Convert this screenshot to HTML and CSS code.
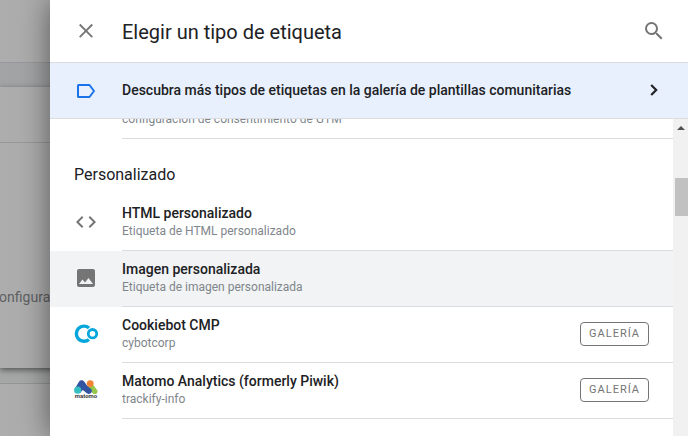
FILE: index.html
```html
<!DOCTYPE html>
<html lang="es">
<head>
<meta charset="utf-8">
<meta name="viewport" content="width=device-width, initial-scale=1">
<title>Elegir un tipo de etiqueta</title>
<link rel="stylesheet" href="styles.css">
</head>
<body>
<div class="page">
  <div class="page-top"></div>
  <div class="page-bar"></div>
  <div class="page-card">
    <div class="card-head"></div>
    <p class="card-text">Configurar</p>
  </div>
  <div class="page-gap"></div>
  <div class="page-next"></div>
</div>
<main class="sheet">
  <header class="sheet-header">
    <button class="icon-button" type="button" aria-label="Cerrar">
      <svg class="icon" viewBox="0 0 24 24"><path d="M5.700 5.500 18.300 18.100M18.300 5.500 5.700 18.100" fill="none" stroke="currentColor" stroke-width="1.800"/></svg>
    </button>
    <h1 class="title">Elegir un tipo de etiqueta</h1>
    <button class="icon-button" type="button" aria-label="Buscar">
      <svg class="icon" viewBox="0 0 24 24"><path fill="currentColor" d="M15.500 14h-.79l-.28-.27A6.471 6.471 0 0 0 16 9.500 6.500 6.500 0 1 0 9.500 16c1.610 0 3.090-.59 4.230-1.570l.27.28v.79l5 4.990L20.490 19l-4.990-5zm-6 0C7.010 14 5 11.990 5 9.500S7.010 5 9.500 5 14 7.010 14 9.500 11.990 14 9.500 14z"/></svg>
    </button>
  </header>
  <a class="banner" href="#galeria">
    <svg class="icon icon-tag" viewBox="0 0 24 24"><path d="M4.500 7H15.500L20 13 15.500 19H4.500A.5.5 0 0 1 4 18.500V7.500A.5.5 0 0 1 4.500 7Z" fill="none" stroke="currentColor" stroke-width="2" stroke-linejoin="round"/></svg>
    <span class="banner-text">Descubra más tipos de etiquetas en la galería de plantillas comunitarias</span>
    <svg class="icon icon-next" viewBox="0 0 24 24"><path d="M9.200 7 14.200 12 9.200 17" fill="none" stroke="currentColor" stroke-width="2.200"/></svg>
  </a>
  <div class="scroll-area">
    <div class="content">
      <div class="scrolled">
        <div class="item">
          <span class="item-icon"></span>
          <span class="item-body item-body-end"><span class="detail">configuración de consentimiento de GTM</span></span>
        </div>
        <h2 class="section-title">Personalizado</h2>
        <div class="item">
          <svg class="item-icon icon" viewBox="0 0 24 24"><path fill="currentColor" d="M9.400 16.600 4.800 12l4.600-4.600L8 6l-6 6 6 6 1.400-1.400zm5.200 0 4.600-4.600-4.600-4.600L16 6l6 6-6 6-1.400-1.400z"/></svg>
          <span class="item-body"><span class="item-text"><span class="name">HTML personalizado</span><span class="detail">Etiqueta de HTML personalizado</span></span></span>
        </div>
        <div class="item item-active">
          <svg class="item-icon icon" viewBox="0 0 24 24"><path fill="currentColor" d="M21 19V5c0-1.100-.9-2-2-2H5c-1.100 0-2 .9-2 2v14c0 1.100.9 2 2 2h14c1.100 0 2-.9 2-2zM8.500 13.500l2.500 3.010L14.500 12l4.500 6H5l3.500-4.500z"/></svg>
          <span class="item-body"><span class="item-text"><span class="name">Imagen personalizada</span><span class="detail">Etiqueta de imagen personalizada</span></span></span>
        </div>
        <div class="item">
          <svg class="item-icon icon" viewBox="0 0 24 24"><path d="M15 6A7.600 7.600 0 1 0 15 17.400" fill="none" stroke="#04a6dc" stroke-width="3.400"/><circle cx="18.500" cy="11.700" r="6.300" fill="#fff"/><circle cx="18.500" cy="11.700" r="4.200" fill="none" stroke="#04a6dc" stroke-width="2.800"/></svg>
          <span class="item-body"><span class="item-text"><span class="name">Cookiebot CMP</span><span class="detail">cybotcorp</span></span><button class="gallery" type="button">GALERÍA</button></span>
        </div>
        <div class="item">
          <svg class="item-icon icon" viewBox="0 0 24 24">
            <path d="M18.500 6 23.300 12.300C24.600 16 20 17.500 18 14.500L14 8Z" fill="#95c748"/>
            <path d="M.8 10.700 4.800 4C6 1.700 9.200 1.700 10.500 4L13 7.500 17.600 11.500C19 15.500 14.500 17.500 12 14.500L8.800 12 6 15Z" fill="#3253a0"/>
            <circle cx="16.200" cy="5.600" r="3.400" fill="#f38334"/>
            <circle cx="3.700" cy="12.200" r="3.600" fill="#35bfc0"/>
            <text class="logo-text" x="12" y="20" text-anchor="middle">matomo</text>
          </svg>
          <span class="item-body"><span class="item-text"><span class="name">Matomo Analytics (formerly Piwik)</span><span class="detail">trackify-info</span></span><button class="gallery" type="button">GALERÍA</button></span>
        </div>
      </div>
    </div>
    <div class="scrollbar">
      <span class="arrow"></span>
      <span class="thumb"></span>
    </div>
  </div>
</main>
</body>
</html>
```
FILE: styles.css
```css
* {
  box-sizing: border-box;
}

body {
  margin: 0;
  font-family: Roboto, "Liberation Sans", sans-serif;
  color: #202124;
}

.page {
  display: flex;
  flex-direction: column;
  height: 100vh;
  overflow: hidden;
  background: #a6a7a7;
}

.page-top {
  height: 63px;
  background: #adadad;
  border-bottom: 1px solid #96989b;
}

.page-bar {
  height: 24px;
  background: #a2a4a5;
}

.page-card {
  height: 281px;
  background: #adadad;
  box-shadow: 0 2px 6px rgba(0, 0, 0, 0.5);
}

.card-head {
  height: 56px;
  border-bottom: 1px solid #969799;
}

.card-text {
  margin: 144px 0 0 -10px;
  font-size: 14px;
  line-height: 20px;
  color: #5f6062;
}

.page-gap {
  height: 16px;
  border-bottom: 1px solid #929497;
}

.page-next {
  flex: 1;
  background: #adadad;
}

.sheet {
  position: absolute;
  inset: 0 0 0 50px;
  display: flex;
  flex-direction: column;
  background: #fff;
  box-shadow: 0 0 28px rgba(0, 0, 0, 0.5);
}

.sheet-header,
.banner {
  display: flex;
  align-items: center;
  gap: 24px;
  padding: 0 22px 0 24px;
  border-bottom: 1px solid #dadce0;
}

.sheet-header {
  height: 63px;
}

.icon-button {
  display: flex;
  padding: 0;
  border: 0;
  background: none;
  color: #757575;
}

.icon {
  flex: none;
  width: 24px;
  height: 24px;
  color: #757575;
}

.title {
  flex: 1;
  margin: 0;
  padding-top: 2px;
  font-size: 20px;
  font-weight: 400;
  line-height: 28px;
}

.banner {
  height: 56px;
  padding-bottom: 2px;
  background: #e8f0fe;
  color: inherit;
  text-decoration: none;
}

.icon-tag {
  color: #1a73e8;
}

.icon-next {
  color: #202124;
}

.banner-text {
  flex: 1;
  font-size: 14px;
  font-weight: 500;
  line-height: 20px;
}

.scroll-area {
  flex: 1;
  min-height: 0;
  display: flex;
}

.content {
  flex: 1;
  overflow: hidden;
}

.scrolled {
  margin-top: -36px;
}

.section-title {
  margin: 0;
  padding: 24px 24px 8px;
  font-size: 16px;
  font-weight: 400;
  line-height: 24px;
}

.item {
  display: flex;
  gap: 24px;
  height: 56px;
  padding-left: 24px;
}

.item-active {
  background: #f1f3f4;
}

.item-icon {
  flex: none;
  width: 24px;
  align-self: center;
  margin-bottom: 2px;
}

.item-body {
  flex: 1;
  display: flex;
  align-items: center;
  justify-content: space-between;
  padding: 0 24px 2px 0;
  border-bottom: 1px solid #dadce0;
}

.item-body-end {
  align-items: flex-end;
  padding-bottom: 11px;
}

.item-text {
  display: flex;
  flex-direction: column;
  padding-bottom: 2px;
}

.name {
  font-size: 14px;
  font-weight: 500;
  line-height: 20px;
}

.detail {
  font-size: 12px;
  line-height: 16px;
  color: #80868b;
}

.gallery {
  height: 24px;
  padding: 0 8px;
  border: 1px solid #757575;
  border-radius: 4px;
  background: #fff;
  font: 400 11px/16px Roboto, sans-serif;
  letter-spacing: 1px;
  color: #757575;
}

.logo-text {
  font: 700 6px Roboto, sans-serif;
  fill: #3b3b3b;
}

.scrollbar {
  display: flex;
  flex-direction: column;
  align-items: center;
  width: 15px;
  background: #f1f1f1;
}

.arrow {
  margin-top: 7px;
  border: 4px solid transparent;
  border-top: 0;
  border-bottom-color: #505050;
}

.thumb {
  align-self: flex-end;
  width: 13px;
  height: 38px;
  margin-top: 48px;
  background: #c1c1c1;
}
```
